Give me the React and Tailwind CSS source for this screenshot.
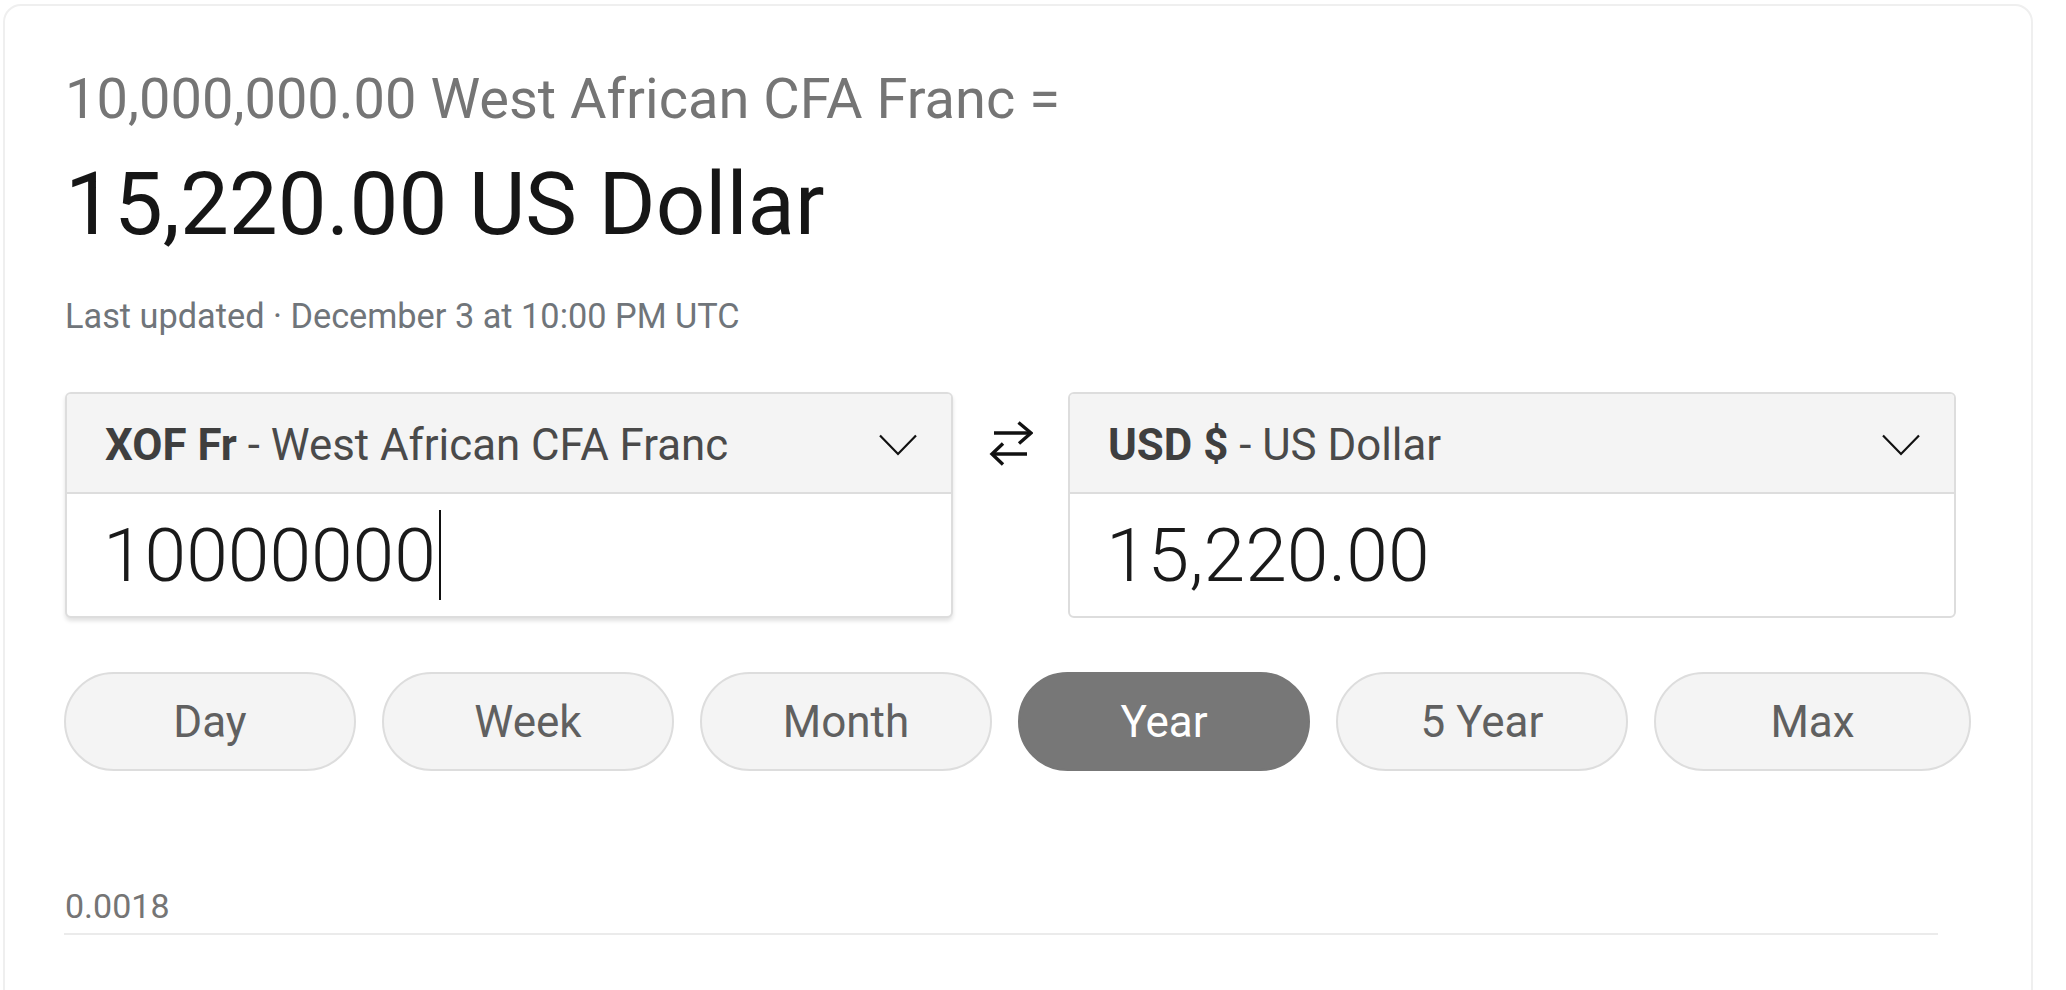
import React from "react";

function Chevron() {
  return (
    <svg width="38" height="22" viewBox="0 0 38 22" fill="none" className="shrink-0">
      <path d="M1 1.5 L19 20 L37 1.5" stroke="#111" strokeWidth="2.2" />
    </svg>
  );
}

function SwapIcon() {
  return (
    <svg width="44" height="46" viewBox="0 0 44 46" fill="none">
      <path d="M5 12 H42" stroke="#111" strokeWidth="3.4" />
      <path d="M29.5 1.5 L42 12 L30 22.5" stroke="#111" strokeWidth="3.4" />
      <path d="M3 33 H38" stroke="#111" strokeWidth="3.4" />
      <path d="M14 22.5 L3 33 L14 43.5" stroke="#111" strokeWidth="3.4" />
    </svg>
  );
}

function CurrencyBox({ code, name, value, cursor, shadow }) {
  return (
    <div
      className={
        "w-[888px] shrink-0 border-2 border-[#dddddd] rounded-[6px] overflow-hidden bg-white " +
        (shadow ? "shadow-[0_3px_4px_rgba(0,0,0,0.12)]" : "")
      }
    >
      <div className="h-[100px] bg-[#f4f4f4] border-b-2 border-[#dddddd] flex items-center justify-between pl-[38px] pr-[34px] pt-[3px]">
        <div className="text-[43.8px] leading-[50px] text-[#4a4a4a] whitespace-nowrap">
          <span className="font-bold text-[#3f3f3f]">{code}</span> - {name}
        </div>
        <Chevron />
      </div>
      <div className="h-[122px] flex items-center pl-[36px]">
        <span className="text-[75px] leading-[86px] font-light text-[#1a1a1a]">
          {value}
        </span>
        {cursor && <span className="inline-block w-[2px] h-[90px] bg-[#111] ml-[3px]" />}
      </div>
    </div>
  );
}

const ranges = ["Day", "Week", "Month", "Year", "5 Year", "Max"];

export default function App() {
  return (
    <div
      className="min-h-screen bg-white pt-[4px] pl-[3px] overflow-hidden"
      style={{ fontFamily: "Roboto, 'Liberation Sans', Arial, sans-serif" }}
    >
      <div className="w-[2030px] h-[1100px] border-2 border-[#efefef] rounded-[18px] bg-white pl-[60px] pt-[60px]">
        <div className="text-[56px] leading-[66px] text-[#757575] whitespace-nowrap">
          10,000,000.00 West African CFA Franc =
        </div>
        <div className="mt-[22px] text-[87px] leading-[100px] text-[#161616] whitespace-nowrap">
          15,220.00 US Dollar
        </div>
        <div className="mt-[42px] text-[34.3px] leading-[40px] text-[#70757a] whitespace-nowrap">
          Last updated · December 3 at 10:00 PM UTC
        </div>

        <div className="mt-[56px] flex items-start">
          <CurrencyBox code="XOF Fr" name="West African CFA Franc" value="10000000" cursor shadow />
          <div className="w-[115px] h-[104px] flex items-center justify-center shrink-0">
            <SwapIcon />
          </div>
          <CurrencyBox code="USD $" name="US Dollar" value="15,220.00" />
        </div>

        <div className="mt-[54px] -ml-[1px] flex gap-[26px]">
          {ranges.map((r) => {
            const active = r === "Year";
            const wide = r === "Max";
            return (
              <div
                key={r}
                className={
                  "h-[99px] rounded-full border-2 flex items-center justify-center text-[44px] leading-[52px] " +
                  (wide ? "w-[317px] " : "w-[292px] ") +
                  (active
                    ? "bg-[#777777] border-[#777777] text-white"
                    : "bg-[#f4f4f4] border-[#dddddd] text-[#606060]")
                }
              >
                {r}
              </div>
            );
          })}
        </div>

        <div className="mt-[115px] text-[34px] leading-[40px] text-[#757575]">0.0018</div>
        <div className="mt-[7px] -ml-[1px] w-[1874px] h-[2px] bg-[#ebebeb]" />
      </div>
    </div>
  );
}
